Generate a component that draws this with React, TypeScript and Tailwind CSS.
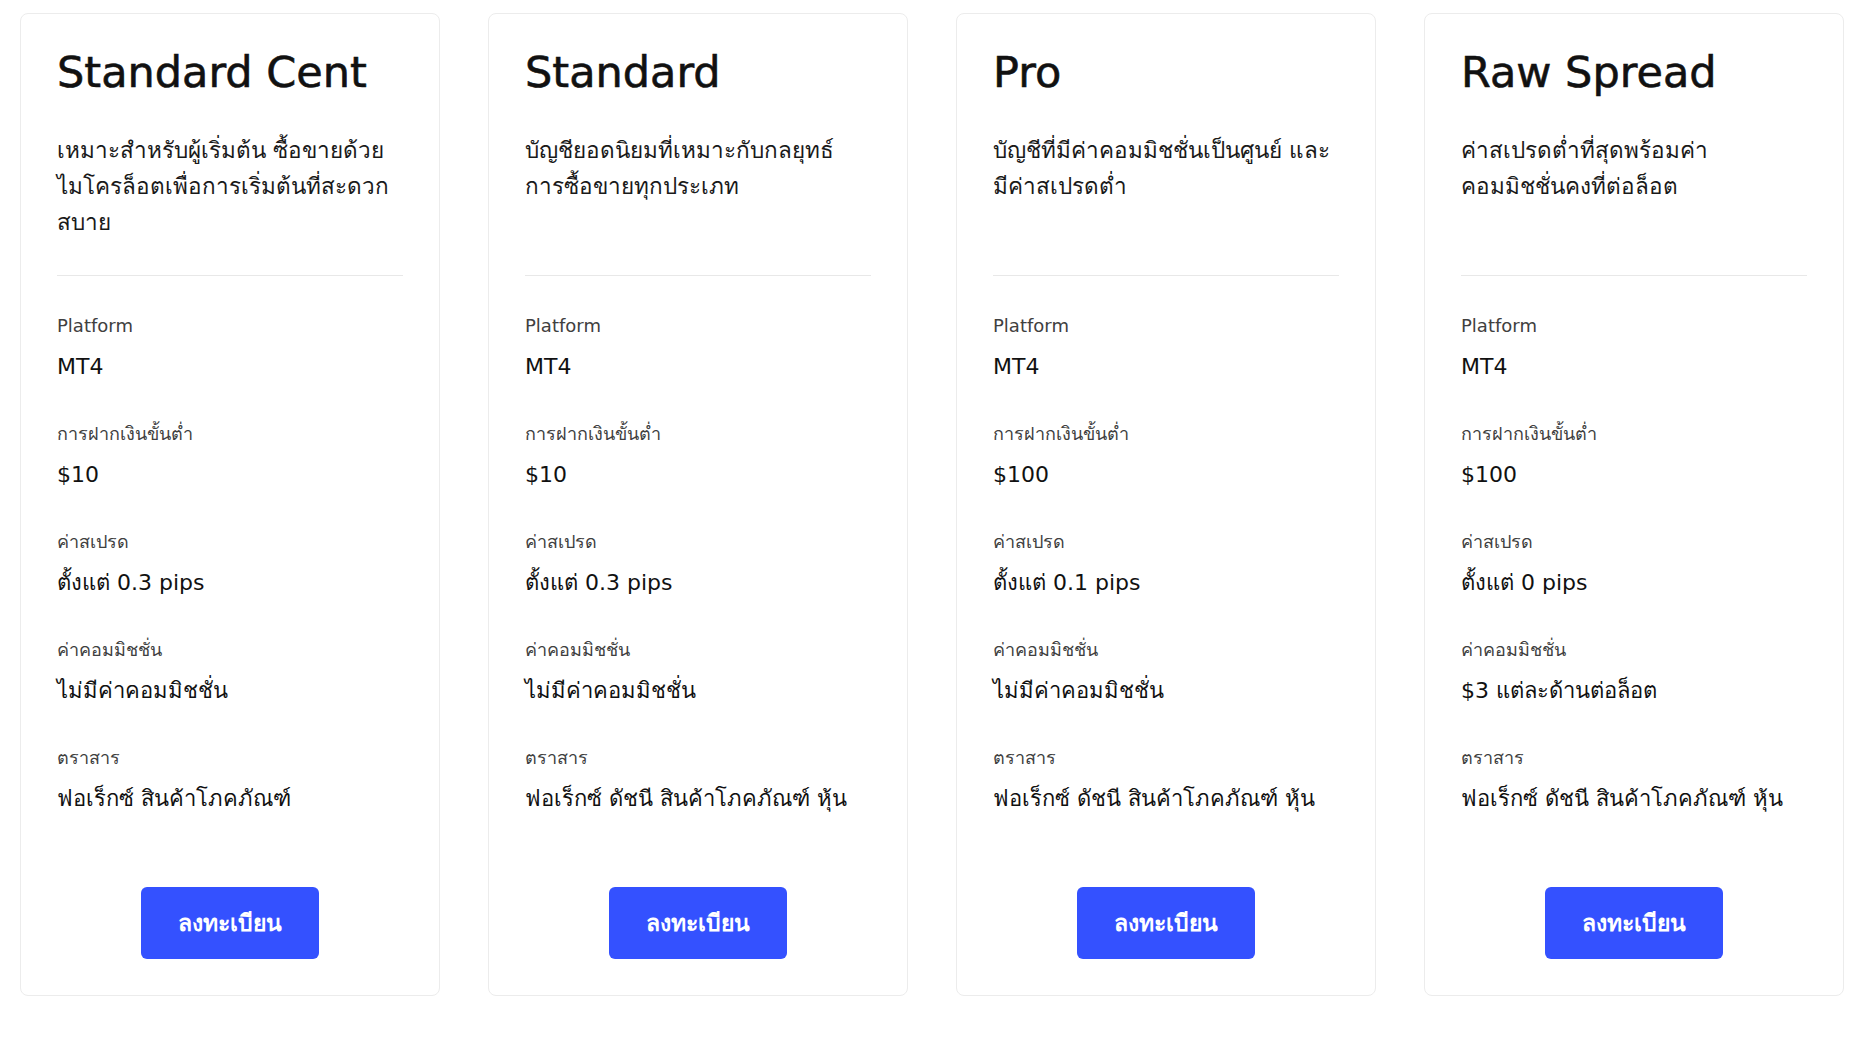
import { ReactNode } from "react";

type Plan = {
  name: string;
  desc: string[];
  platform: string;
  deposit: string;
  spread: string;
  commission: string;
  instruments: string;
};

const plans: Plan[] = [
  {
    name: "Standard Cent",
    desc: ["เหมาะสำหรับผู้เริ่มต้น ซื้อขายด้วย", "ไมโครล็อตเพื่อการเริ่มต้นที่สะดวก", "สบาย"],
    platform: "MT4",
    deposit: "$10",
    spread: "ตั้งแต่ 0.3 pips",
    commission: "ไม่มีค่าคอมมิชชั่น",
    instruments: "ฟอเร็กซ์ สินค้าโภคภัณฑ์",
  },
  {
    name: "Standard",
    desc: ["บัญชียอดนิยมที่เหมาะกับกลยุทธ์", "การซื้อขายทุกประเภท"],
    platform: "MT4",
    deposit: "$10",
    spread: "ตั้งแต่ 0.3 pips",
    commission: "ไม่มีค่าคอมมิชชั่น",
    instruments: "ฟอเร็กซ์ ดัชนี สินค้าโภคภัณฑ์ หุ้น",
  },
  {
    name: "Pro",
    desc: ["บัญชีที่มีค่าคอมมิชชั่นเป็นศูนย์ และ", "มีค่าสเปรดต่ำ"],
    platform: "MT4",
    deposit: "$100",
    spread: "ตั้งแต่ 0.1 pips",
    commission: "ไม่มีค่าคอมมิชชั่น",
    instruments: "ฟอเร็กซ์ ดัชนี สินค้าโภคภัณฑ์ หุ้น",
  },
  {
    name: "Raw Spread",
    desc: ["ค่าสเปรดต่ำที่สุดพร้อมค่า", "คอมมิชชั่นคงที่ต่อล็อต"],
    platform: "MT4",
    deposit: "$100",
    spread: "ตั้งแต่ 0 pips",
    commission: "$3 แต่ละด้านต่อล็อต",
    instruments: "ฟอเร็กซ์ ดัชนี สินค้าโภคภัณฑ์ หุ้น",
  },
];

function Spec({ label, children }: { label: string; children: ReactNode }) {
  return (
    <div className="flex flex-col">
      <div className="text-[18px] leading-[28px] text-[#404040]">{label}</div>
      <div className="mt-[13px] text-[22px] leading-[28px] text-[#111]">{children}</div>
    </div>
  );
}

function PlanCard({ plan }: { plan: Plan }) {
  return (
    <div className="flex w-[420px] flex-col rounded-lg border border-[#ececec] bg-white px-9 pt-[32px] pb-[36px]">
      <h2 className="text-[43px] leading-[52px] text-[#111] [-webkit-text-stroke:0.6px_#111]">{plan.name}</h2>
      <p className="mt-[34px] h-[135px] text-[22.5px] leading-[36px] text-[#1a1a1a]">
        {plan.desc.map((line, i) => (
          <span key={i} className="block">
            {line}
          </span>
        ))}
      </p>
      <div className="mt-[8px] h-px bg-[#e8e8e8]" />
      <div className="mt-[36px] flex flex-col gap-[39px]">
        <Spec label="Platform">{plan.platform}</Spec>
        <Spec label="การฝากเงินขั้นต่ำ">{plan.deposit}</Spec>
        <Spec label="ค่าสเปรด">{plan.spread}</Spec>
        <Spec label="ค่าคอมมิชชั่น">{plan.commission}</Spec>
        <Spec label="ตราสาร">{plan.instruments}</Spec>
      </div>
      <div className="mt-[74px] flex justify-center">
        <button className="h-[72px] w-[178px] rounded-md bg-[#3451ff] text-[23px] font-bold text-white">
          ลงทะเบียน
        </button>
      </div>
    </div>
  );
}

export default function App() {
  return (
    <div className="min-h-screen bg-white pt-[13px] pl-[20px] font-['DejaVu_Sans','Noto_Sans',sans-serif]">
      <div className="flex gap-[48px]">
        {plans.map((p) => (
          <PlanCard key={p.name} plan={p} />
        ))}
      </div>
    </div>
  );
}
